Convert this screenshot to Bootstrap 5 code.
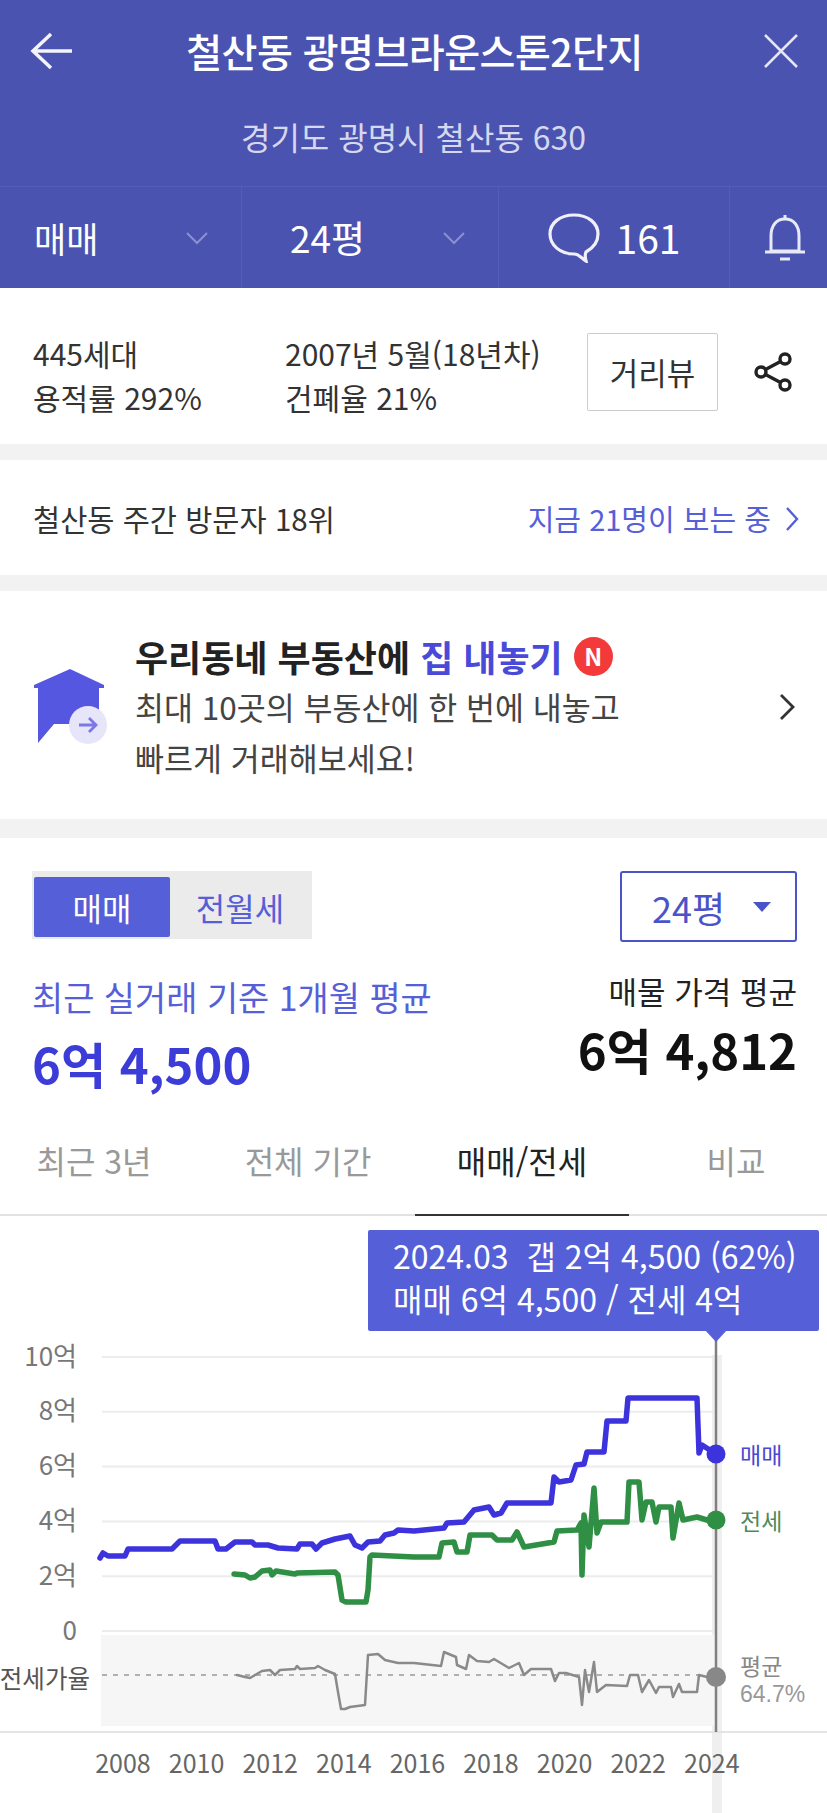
<!DOCTYPE html>
<html lang="ko">
  <head>
    <meta charset="UTF-8" />
    <meta name="viewport" content="width=device-width, initial-scale=1.0" />
    <title>철산동 광명브라운스톤2단지</title>
    <link
      href="https://cdn.jsdelivr.net/npm/bootstrap@5.3.3/dist/css/bootstrap.min.css"
      rel="stylesheet"
    />
    <style>
      body {
        font-family: "Noto Sans CJK KR", "Noto Sans", sans-serif;
        color: #333;
        background: #fff;
        overflow: hidden;
      }
      .top-bar {
        background: #4b53b0;
        color: #fff;
      }
      .title-row {
        height: 105px;
        padding: 0 28px 4px 30px;
      }
      .title-side { width: 46px; }
      .title-text {
        font-size: 39px;
        line-height: 1;
        font-weight: 500;
        letter-spacing: -0.5px;
      }
      .addr-text {
        height: 81px;
        font-size: 32px;
        line-height: 1;
        color: #d5d8ee;
        padding-bottom: 19px;
      }
      .filter-row {
        height: 102px;
        border-top: 1px solid #565db7;
      }
      .filter-cell {
        border-right: 1px solid #565db7;
        font-size: 35px;
        line-height: 1;
      }
      .cell-deal { width: 242px; padding: 0 32px 0 34px; }
      .cell-size { width: 257px; padding: 0 32px 0 48px; font-size: 37px; }
      .cell-talk { width: 231px; gap: 16px; font-size: 39px; }
      .cell-bell { flex: 1; border-right: 0; padding-left: 12px; }
      .gap-band { height: 16px; background: #f2f2f2; }
      .gap-tall { height: 19px; }
      .info-row {
        height: 156px;
        padding: 12px 33px 0 33px;
        font-size: 30px;
        line-height: 44px;
      }
      .info-a { width: 252px; margin-top: 5px; }
      .info-b { width: 302px; margin-top: 5px; }
      .road-btn {
        width: 131px;
        height: 78px;
        border: 1px solid #ccc;
        font-size: 31px;
        border-radius: 2px;
      }
      .rank-row {
        height: 115px;
        padding: 2px 28px 0 33px;
        font-size: 29.500px;
        line-height: 1;
      }
      .now-link { color: #5560d8; font-size: 29px; gap: 14px; }
      .promo-row {
        height: 228px;
        padding: 4px 32px 0 34px;
      }
      .promo-body { margin-left: 27px; }
      .promo-title {
        font-size: 36px;
        font-weight: 700;
        line-height: 50px;
        color: #222;
      }
      .promo-title em { font-style: normal; color: #4a4ad8; }
      .promo-text {
        font-size: 31.500px;
        line-height: 51px;
        color: #444;
      }
      .new-mark {
        width: 39px;
        height: 39px;
        margin-left: 11px;
        background: #f33a3a;
        color: #fff;
        font-size: 24px;
        font-weight: 700;
      }
      .price-wrap { padding: 33px 30px 0 32px; }
      .deal-switch {
        width: 280px;
        height: 68px;
        background: #ebebeb;
        padding: 6px 2px 2px 2px;
        font-size: 32px;
      }
      .deal-on {
        width: 136px;
        background: #5560d8;
        color: #fff;
        border-radius: 2px;
      }
      .deal-off { flex: 1; color: #5560d8; }
      .size-select {
        width: 177px;
        height: 71px;
        border: 2px solid #4b53c8;
        border-radius: 3px;
        color: #4b53c8;
        font-size: 36px;
        padding: 0 24px 0 30px;
      }
      .size-caret {
        border-left: 9px solid transparent;
        border-right: 9px solid transparent;
        border-top: 10px solid #4b53c8;
      }
      .price-row { margin-top: 33px; }
      .price-label { font-size: 33.900px; line-height: 44px; color: #5560d8; }
      .price-main {
        font-size: 49px;
        font-weight: 700;
        line-height: 64px;
        color: #3c3cd8;
        margin-top: 12px;
      }
      .listing-label { font-size: 31px; line-height: 44px; color: #222; margin-top: -6px; }
      .listing-main {
        font-size: 49px;
        font-weight: 700;
        line-height: 64px;
        color: #111;
        margin-top: 4px;
      }
      .range-line {
        height: 90px;
        margin-top: 31px;
        border-bottom: 2px solid #e2e2e2;
      }
      .range-tabs {
        height: 90px;
        margin-left: -13px;
        font-size: 32px;
        color: #999;
      }
      .range-tab {
        width: 214px;
        flex: none;
        display: flex;
        align-items: center;
        justify-content: center;
        padding-bottom: 23px;
        position: relative;
      }
      .range-tab.on { color: #222; }
      .range-tab.on::after {
        content: "";
        position: absolute;
        left: 0;
        right: 0;
        bottom: 0;
        height: 2px;
        background: #333;
      }
      .chart-box { position: relative; height: 597px; }
      .chart-svg { display: block; }
      .chart-svg text { font-family: "Noto Sans CJK KR", "Noto Sans", sans-serif; }
      .chart-svg text.num-label { font-family: "Liberation Sans", sans-serif; }
      .price-tip {
        position: absolute;
        left: 368px;
        top: 14px;
        width: 451px;
        height: 101px;
        padding: 4px 0 0 25px;
        background: #5560d8;
        color: #fff;
        border-radius: 2px;
        font-size: 32px;
        line-height: 43px;
        white-space: nowrap;
      }
      .price-tip::after {
        content: "";
        position: absolute;
        left: 337px;
        top: 100px;
        border-left: 11px solid transparent;
        border-right: 11px solid transparent;
        border-top: 12px solid #5560d8;
      }
    </style>
  </head>
  <body>
    <!-- 상단 헤더 -->
    <div class="top-bar">
      <div class="title-row d-flex align-items-center justify-content-between">
        <div class="title-side">
          <svg class="d-block" width="44" height="38" viewBox="0 0 44 38" fill="none" stroke="#f4f4fb" stroke-width="3.500">
            <path d="M21 2 3 19l18 17M3 19h39" />
          </svg>
        </div>
        <div class="title-text">철산동 광명브라운스톤2단지</div>
        <div class="title-side d-flex justify-content-end">
          <svg width="36" height="36" viewBox="0 0 36 36" fill="none" stroke="#e4e6f5" stroke-width="2.500">
            <path d="M2 2l32 32M34 2 2 34" />
          </svg>
        </div>
      </div>
      <div class="addr-text d-flex align-items-center justify-content-center">경기도 광명시 철산동 630</div>
      <div class="filter-row d-flex">
        <div class="filter-cell cell-deal d-flex align-items-center justify-content-between">
          <span>매매</span>
          <svg width="24" height="14" viewBox="0 0 24 14" fill="none" stroke="#8a90d0" stroke-width="2"><path d="M2 2l10 10L22 2" /></svg>
        </div>
        <div class="filter-cell cell-size d-flex align-items-center justify-content-between">
          <span>24평</span>
          <svg width="24" height="14" viewBox="0 0 24 14" fill="none" stroke="#8a90d0" stroke-width="2"><path d="M2 2l10 10L22 2" /></svg>
        </div>
        <div class="filter-cell cell-talk d-flex align-items-center justify-content-center">
          <svg width="52" height="50" viewBox="0 0 52 50" fill="none" stroke="#f0f0fa" stroke-width="3.200">
            <path d="M38 48c-1-4-1-7 0-9 7-4 12-10 12-18C50 10 40 2 26 2S2 10 2 21s10 20 24 20c3 0 4 1 12 7z" />
          </svg>
          <span>161</span>
        </div>
        <div class="filter-cell cell-bell d-flex align-items-center justify-content-center">
          <svg width="44" height="46" viewBox="0 0 44 46" fill="none" stroke="#e8e9f7" stroke-width="3">
            <path d="M22 4C13 4 8 11 8 21v15h28V21C36 11 31 4 22 4zM2 37h40" />
            <path d="M22 0v4M17 44h10" />
          </svg>
        </div>
      </div>
    </div>

    <!-- 단지 정보 -->
    <div class="info-row d-flex align-items-center">
      <div class="info-a">445세대<br />용적률 292%</div>
      <div class="info-b text-nowrap">2007년 5월(18년차)<br />건폐율 21%</div>
      <div class="road-btn d-flex align-items-center justify-content-center">거리뷰</div>
      <svg class="ms-auto" width="40" height="40" viewBox="0 0 40 40" fill="none" stroke="#222" stroke-width="3.400">
        <circle cx="7" cy="20" r="5" />
        <circle cx="31" cy="7" r="5" />
        <circle cx="31" cy="33" r="5" />
        <path d="M11.500 17.500l15-8M11.500 22.500l15 8" />
      </svg>
    </div>
    <div class="gap-band"></div>

    <div class="rank-row d-flex align-items-center justify-content-between">
      <span>철산동 주간 방문자 18위</span>
      <span class="now-link d-flex align-items-center">
        지금 21명이 보는 중
        <svg width="14" height="26" viewBox="0 0 14 26" fill="none" stroke="#5560d8" stroke-width="2.400"><path d="M2 2l10 11L2 24" /></svg>
      </span>
    </div>
    <div class="gap-band"></div>

    <!-- 집 내놓기 -->
    <div class="promo-row d-flex align-items-center">
      <svg width="74" height="76" viewBox="0 0 74 76" class="flex-shrink-0">
        <path d="M36 0 70 16v3h-5v36H20L4 74V19H0v-3z" fill="#5557e0" />
        <circle cx="54" cy="56" r="19" fill="#e6e5fa" />
        <path d="M45 56h17M55 49l7 7-7 7" fill="none" stroke="#7b78e6" stroke-width="2.800" />
      </svg>
      <div class="promo-body">
        <div class="promo-title d-flex align-items-center">
          <span>우리동네 부동산에 <em>집 내놓기</em></span>
          <span class="new-mark rounded-circle d-inline-flex align-items-center justify-content-center">N</span>
        </div>
        <div class="promo-text">최대 10곳의 부동산에 한 번에 내놓고<br />빠르게 거래해보세요!</div>
      </div>
      <svg class="ms-auto" width="16" height="28" viewBox="0 0 16 28" fill="none" stroke="#333" stroke-width="2.800"><path d="M2 2l12 12L2 26" /></svg>
    </div>
    <div class="gap-band gap-tall"></div>

    <!-- 시세 요약 -->
    <div class="price-wrap">
      <div class="d-flex justify-content-between align-items-start">
        <div class="deal-switch d-flex">
          <div class="deal-on d-flex align-items-center justify-content-center">매매</div>
          <div class="deal-off d-flex align-items-center justify-content-center">전월세</div>
        </div>
        <div class="size-select d-flex align-items-center justify-content-between">
          <span>24평</span>
          <span class="size-caret"></span>
        </div>
      </div>
      <div class="price-row d-flex justify-content-between">
        <div>
          <div class="price-label">최근 실거래 기준 1개월 평균</div>
          <div class="price-main">6억 4,500</div>
        </div>
        <div class="text-end">
          <div class="listing-label">매물 가격 평균</div>
          <div class="listing-main">6억 4,812</div>
        </div>
      </div>
    </div>

    <div class="range-line">
      <div class="range-tabs d-flex">
        <div class="range-tab">최근 3년</div>
        <div class="range-tab">전체 기간</div>
        <div class="range-tab on">매매/전세</div>
        <div class="range-tab">비교</div>
      </div>
    </div>

    <!-- 차트 -->
    <div class="chart-box">
      <div class="price-tip">2024.03&nbsp; 갭 2억 4,500 (62%)<br />매매 6억 4,500 / 전세 4억</div>
      <svg id="chart" class="chart-svg" width="827" height="597" viewBox="0 1216 827 597"></svg>
    </div>

    <script>
      const svg = document.getElementById("chart");
      const blue = [[100,1558],[103,1553],[108,1556],[125,1556],[128,1549],[172,1549],[180,1541],[215,1541],[218,1549],[226,1549],[235,1542],[252,1542],[255,1545],[268,1545],[278,1548],[297,1549],[300,1544],[312,1544],[316,1549],[322,1543],[335,1539],[350,1536],[355,1545],[362,1548],[368,1542],[380,1541],[385,1535],[394,1533],[398,1530],[414,1531],[444,1528],[447,1523],[464,1522],[474,1510],[489,1507],[494,1515],[501,1513],[507,1503],[551,1503],[554,1477],[559,1482],[571,1480],[576,1465],[584,1464],[587,1452],[604,1452],[607,1421],[626,1421],[628,1398],[697,1398],[699,1453],[702,1445],[716,1454]];
      const green = [[234,1574],[245,1575],[250,1578],[255,1577],[262,1571],[270,1570],[272,1575],[276,1571],[295,1574],[297,1573],[335,1572],[338,1575],[342,1600],[346,1602],[366,1602],[368,1590],[370,1557],[372,1555],[414,1557],[439,1557],[442,1543],[454,1542],[457,1552],[467,1552],[470,1535],[492,1535],[497,1540],[512,1540],[517,1532],[524,1547],[554,1542],[557,1531],[577,1530],[581,1523],[582,1575],[584,1515],[589,1547],[594,1488],[597,1533],[601,1522],[627,1522],[629,1482],[639,1482],[642,1520],[646,1502],[652,1502],[656,1522],[659,1507],[671,1507],[673,1538],[679,1503],[683,1520],[697,1517],[707,1520],[716,1520]];
      const ratio = [[237,1675],[245,1677],[250,1678],[262,1671],[270,1670],[275,1675],[280,1670],[295,1669],[297,1666],[300,1669],[315,1668],[318,1666],[325,1670],[335,1674],[338,1692],[341,1709],[345,1709],[350,1707],[365,1705],[368,1655],[378,1654],[385,1660],[398,1663],[414,1663],[441,1666],[444,1652],[456,1657],[457,1665],[466,1669],[469,1655],[477,1661],[489,1662],[494,1659],[509,1668],[519,1663],[524,1675],[531,1669],[551,1669],[555,1681],[559,1673],[566,1673],[579,1677],[582,1705],[585,1670],[589,1692],[594,1662],[597,1692],[606,1685],[627,1686],[630,1675],[638,1675],[642,1692],[649,1680],[656,1693],[659,1687],[671,1687],[673,1697],[679,1684],[682,1692],[697,1692],[699,1675],[707,1677],[716,1677]];

      function line(points, color, width) {
        return `<polyline points="${points.join(" ")}" fill="none" stroke="${color}" stroke-width="${width}" stroke-linejoin="round" stroke-linecap="round" />`;
      }

      function label(x, y, text, size, color, anchor, cls = "") {
        return `<text class="${cls}" x="${x}" y="${y}" font-size="${size}" fill="${color}" text-anchor="${anchor}" dominant-baseline="central">${text}</text>`;
      }

      let html = `<rect x="712" y="1355" width="10" height="458" fill="#efefef" />`;
      html += `<rect x="101" y="1635" width="615" height="91" fill="#f6f6f6" />`;

      // 가로 눈금
      ["10억", "8억", "6억", "4억", "2억", "0"].forEach((name, i) => {
        const y = 1357 + i * 54.8;
        html += `<line x1="102" x2="716" y1="${y}" y2="${y}" stroke="#ececec" stroke-width="2" />`;
        html += label(77, y - 3, name, 26, "#777", "end");
      });
      html += `<line x1="0" x2="827" y1="1732" y2="1732" stroke="#e4e4e4" stroke-width="2" />`;
      html += `<line x1="102" x2="716" y1="1675" y2="1675" stroke="#999" stroke-width="1.500" stroke-dasharray="5 6" />`;
      html += label(90, 1677, "전세가율", 24.5, "#555", "end");

      // 연도 라벨
      for (let i = 0; i < 9; i++) {
        html += label(123 + i * 73.6, 1762, 2008 + i * 2, 25, "#666", "middle");
      }

      html += `<line x1="716" x2="716" y1="1340" y2="1732" stroke="#808080" stroke-width="2.500" />`;
      html += line(ratio, "#8a8a8a", 2.5);
      html += line(green, "#2f8f45", 5.5);
      html += line(blue, "#3c33dc", 5.5);
      html += `<circle cx="716" cy="1454" r="9.500" fill="#3c33dc" />`;
      html += `<circle cx="716" cy="1520" r="9.500" fill="#2f8f45" />`;
      html += `<circle cx="716" cy="1677" r="10" fill="#888" />`;
      html += label(740, 1454, "매매", 23, "#4a48d0", "start");
      html += label(740, 1520, "전세", 23, "#4e8a5c", "start");
      html += label(740, 1665, "평균", 23, "#888", "start");
      html += label(740, 1694, "64.7%", 23, "#999", "start", "num-label");
      svg.innerHTML = html;
    </script>
    <script src="https://cdn.jsdelivr.net/npm/bootstrap@5.3.3/dist/js/bootstrap.bundle.min.js"></script>
  </body>
</html>
